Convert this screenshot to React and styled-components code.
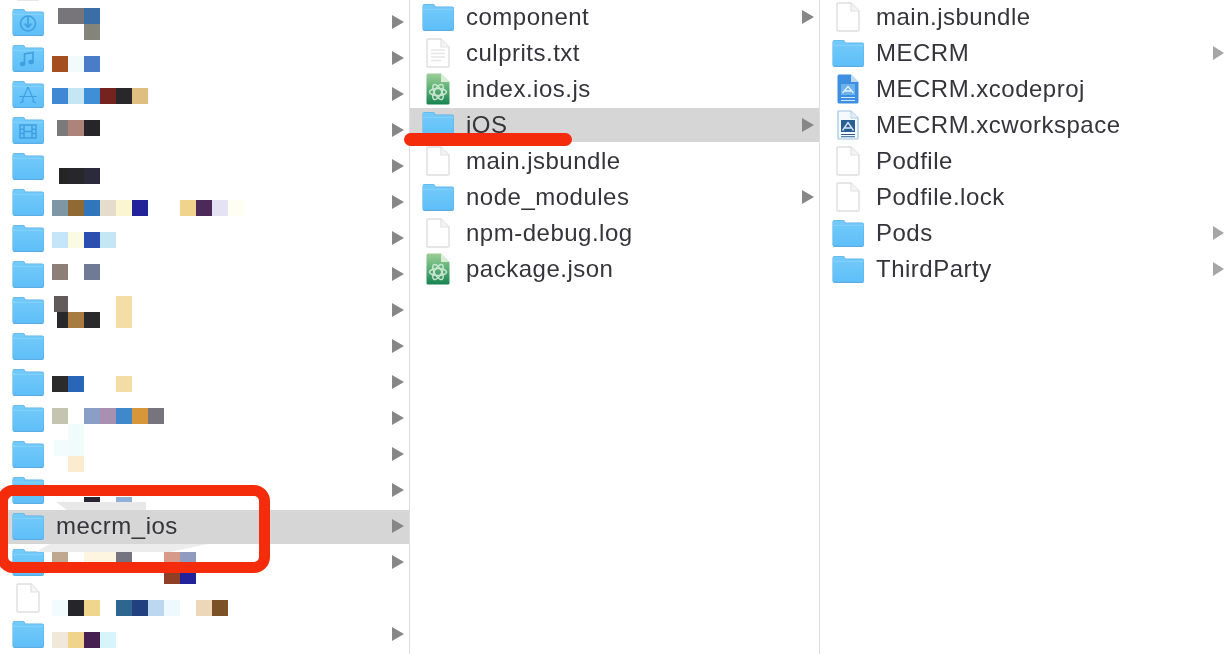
import React from 'react'
import styled, { createGlobalStyle } from 'styled-components'

const GlobalStyle = createGlobalStyle`
  html, body {
    margin: 0;
    padding: 0;
    background: #fff;
    overflow: hidden;
  }
`

const Finder = styled.div`
  position: relative;
  display: flex;
  width: 1226px;
  height: 654px;
  overflow: hidden;
  background: #fff;
  filter: blur(0.55px);
  font-family: 'Liberation Sans', Arial, sans-serif;
`

const Column = styled.div`
  flex: 0 0 410px;
  box-sizing: border-box;
  height: 690px;
  margin-top: ${(props) => props.$offset}px;
  border-right: 1px solid #dedede;
`

const Row = styled.div`
  display: flex;
  align-items: center;
  gap: 12px;
  height: 36px;
  box-sizing: border-box;
  padding: 0 5px 0 12px;
  background: ${(props) =>
    props.$band === undefined
      ? 'transparent'
      : `linear-gradient(transparent ${props.$band}px, #d6d6d6 ${props.$band}px, #d6d6d6 ${props.$band + 34}px, transparent ${props.$band + 34}px)`};
`

const IconSlot = styled.div`
  flex: 0 0 32px;
  height: 32px;
  display: flex;
  align-items: center;
  justify-content: center;
`

const Name = styled.span`
  flex: 1;
  font-size: 24px;
  letter-spacing: 0.5px;
  color: #34343a;
  white-space: nowrap;
`

const Arrow = styled.i`
  width: 0;
  height: 0;
  border-left: ${(props) => (props.$pale ? '11px solid #a6a6a6' : '12px solid #878787')};
  border-top: 7px solid transparent;
  border-bottom: 7px solid transparent;
`

const Mosaic = styled.div`
  position: absolute;
  left: 52px;
  top: 8px;
  display: grid;
  grid-template-columns: repeat(12, 16px);
  grid-auto-rows: 16px;
`

const Tile = styled.div`
  grid-row: ${(props) => props.$row + 1};
  grid-column: ${(props) => props.$col + 1};
  background: ${(props) => props.$color};
  margin-left: ${(props) => props.$inset || 0}px;
  margin-top: ${(props) => props.$drop || 0}px;
`

const SmearTop = styled.div`
  position: absolute;
  left: 56px;
  top: 502px;
  width: 90px;
  height: 8px;
  background: #e8e8e8;
  clip-path: polygon(0 0, 100% 0, 100% 100%, 12% 100%);
`

const SmearBottom = styled.div`
  position: absolute;
  left: 36px;
  top: 544px;
  width: 172px;
  height: 8px;
  background: #ececec;
  clip-path: polygon(8% 0, 100% 0, 78% 100%, 0 100%);
`

const RedBox = styled.div`
  position: absolute;
  left: -3px;
  top: 485px;
  width: 273px;
  height: 88px;
  box-sizing: border-box;
  border: 11px solid #f52c0c;
  border-radius: 16px;
`

const RedLine = styled.div`
  position: absolute;
  left: 404px;
  top: 133px;
  width: 168px;
  height: 13px;
  border-radius: 7px;
  background: #f52c0c;
`

const FolderIcon = ({ glyph }) => (
  <svg width="32" height="28" viewBox="0 0 32 28">
    <defs>
      <linearGradient id="folderFill" x1="0" y1="0" x2="0" y2="1">
        <stop offset="0" stopColor="#74cbfa" />
        <stop offset="1" stopColor="#5fbff8" />
      </linearGradient>
    </defs>
    <path d="M0.5 3 Q0.5 1 2.5 1 H11 Q12.6 1 13.4 3.4 H30 Q32 3.4 32 5.4 V26 Q32 28 30 28 H2.5 Q0.5 28 0.5 26 Z" fill="#5aaee4" />
    <path d="M0.8 3.4 Q0.8 1.6 2.6 1.6 H11 Q12.2 1.6 13 4.2 H30 Q31.6 4.2 31.6 5.6 V25.6 Q31.6 26.8 30 26.8 H2.4 Q0.8 26.8 0.8 25.6 Z" fill="url(#folderFill)" />
    <path d="M1 6.4 H31.4" stroke="#86d3fb" strokeWidth="1" />
    {glyph === 'download' && (
      <g fill="none" stroke="#3f9fe2" strokeWidth="1.6">
        <circle cx="16" cy="15.5" r="7.5" />
        <path d="M16 9 V19 M12.6 15.6 L16 19.4 L19.4 15.6" />
      </g>
    )}
    {glyph === 'music' && (
      <g fill="#3f9fe2" stroke="#3f9fe2">
        <path d="M12.5 20 V10 L21 8.5 V18" fill="none" strokeWidth="1.6" />
        <ellipse cx="10.6" cy="20" rx="2.4" ry="1.9" />
        <ellipse cx="19.1" cy="18" rx="2.4" ry="1.9" />
      </g>
    )}
    {glyph === 'apps' && (
      <g fill="none" stroke="#3f9fe2" strokeWidth="1.2">
        <path d="M16 7 L10 21 M16 7 L22 21 M7 16.5 H25 M12 21 L8 23 M20 21 L24 23" />
      </g>
    )}
    {glyph === 'movies' && (
      <g fill="none" stroke="#3f9fe2" strokeWidth="1.5">
        <rect x="8" y="9" width="16" height="13" />
        <path d="M12 9 V22 M20 9 V22 M8 13.3 H12 M8 17.6 H12 M20 13.3 H24 M20 17.6 H24 M12 15.5 H20" />
      </g>
    )}
  </svg>
)

const DocIcon = ({ lines }) => (
  <svg width="24" height="30" viewBox="0 0 24 30">
    <path d="M1 2 Q1 1 2 1 H15 L23 9 V28 Q23 29 22 29 H2 Q1 29 1 28 Z" fill="#fff" stroke="#dedede" strokeWidth="1.4" />
    <path d="M15 1 V9 H23" fill="#f4f4f4" stroke="#e2e2e2" strokeWidth="1.2" />
    {lines && <path d="M5 12 H19 M5 15.5 H19 M5 19 H19 M5 22.5 H15" stroke="#e6e6e6" strokeWidth="1.6" />}
  </svg>
)

const ScriptIcon = () => (
  <svg width="24" height="32" viewBox="0 0 24 32">
    <defs>
      <linearGradient id="scriptFill" x1="0" y1="0" x2="0" y2="1">
        <stop offset="0" stopColor="#9ccf98" />
        <stop offset="0.55" stopColor="#55ab72" />
        <stop offset="1" stopColor="#17824f" />
      </linearGradient>
    </defs>
    <path d="M0.5 2 Q0.5 0.5 2 0.5 H15 L23.5 9 V30 Q23.5 31.5 22 31.5 H2 Q0.5 31.5 0.5 30 Z" fill="url(#scriptFill)" />
    <path d="M15 0.5 V9 H23.5 Z" fill="#d8ecd6" />
    <g fill="none" stroke="#c8e6cf" strokeWidth="1.5">
      <ellipse cx="12" cy="19" rx="8.5" ry="3.6" />
      <ellipse cx="12" cy="19" rx="8.5" ry="3.6" transform="rotate(60 12 19)" />
      <ellipse cx="12" cy="19" rx="8.5" ry="3.6" transform="rotate(120 12 19)" />
    </g>
  </svg>
)

const ProjectIcon = () => (
  <svg width="22" height="30" viewBox="0 0 22 30">
    <path d="M0.5 2 Q0.5 0.5 2 0.5 H14 L21.5 8 V28 Q21.5 29.5 20 29.5 H2 Q0.5 29.5 0.5 28 Z" fill="#3e8fdf" />
    <path d="M14 0.5 V8 H21.5 Z" fill="#bcdcf6" />
    <rect x="4" y="10" width="14" height="11" fill="#6cb2ee" />
    <path d="M5.5 19 L11 12.5 L16.5 19 M8 17 H14" fill="none" stroke="#e4f2fd" strokeWidth="1.3" />
    <path d="M4 23.5 H18 M4 26.5 H18" stroke="#cfe6fa" strokeWidth="1.2" />
  </svg>
)

const WorkspaceIcon = () => (
  <svg width="22" height="30" viewBox="0 0 22 30">
    <path d="M1 2 Q1 1 2 1 H14 L21 8 V28 Q21 29 20 29 H2 Q1 29 1 28 Z" fill="#f6fafd" stroke="#9cc4e4" strokeWidth="1.2" />
    <path d="M14 1 V8 H21" fill="#e6eff6" stroke="#b8d2e6" strokeWidth="1" />
    <rect x="4" y="10" width="14" height="12" fill="#2b5f94" />
    <path d="M5.5 20.5 L11 12.5 L16.5 20.5 M8 18 H14" fill="none" stroke="#cfe4f6" strokeWidth="1.4" />
    <path d="M4 24.5 H18 M4 26.8 H18" stroke="#2b5f94" strokeWidth="1.1" />
  </svg>
)

const icons = {
  folder: <FolderIcon />,
  download: <FolderIcon glyph="download" />,
  music: <FolderIcon glyph="music" />,
  apps: <FolderIcon glyph="apps" />,
  movies: <FolderIcon glyph="movies" />,
  doc: <DocIcon />,
  text: <DocIcon lines />,
  script: <ScriptIcon />,
  project: <ProjectIcon />,
  workspace: <WorkspaceIcon />,
}

const plainFolders = (count) => Array.from({ length: count }, () => ({ icon: 'folder', more: true }))

const hiddenRows = [
  { icon: 'doc' },
  { icon: 'download', more: true },
  { icon: 'music', more: true },
  { icon: 'apps', more: true },
  { icon: 'movies', more: true },
  ...plainFolders(10),
  { icon: 'folder', more: true, name: 'mecrm_ios', band: 2 },
  { icon: 'folder', more: true },
  { icon: 'doc' },
  { icon: 'folder', more: true },
]

const projectRows = [
  { icon: 'folder', name: 'component', more: true },
  { icon: 'text', name: 'culprits.txt' },
  { icon: 'script', name: 'index.ios.js' },
  { icon: 'folder', name: 'iOS', more: true, band: 1 },
  { icon: 'doc', name: 'main.jsbundle' },
  { icon: 'folder', name: 'node_modules', more: true },
  { icon: 'doc', name: 'npm-debug.log' },
  { icon: 'script', name: 'package.json' },
]

const iosRows = [
  { icon: 'doc', name: 'main.jsbundle' },
  { icon: 'folder', name: 'MECRM', more: true, pale: true },
  { icon: 'project', name: 'MECRM.xcodeproj' },
  { icon: 'workspace', name: 'MECRM.xcworkspace' },
  { icon: 'doc', name: 'Podfile' },
  { icon: 'doc', name: 'Podfile.lock' },
  { icon: 'folder', name: 'Pods', more: true, pale: true },
  { icon: 'folder', name: 'ThirdParty', more: true, pale: true },
]

// the scribbled out names in the first column, [grid row, grid column, colour, inset, drop]
const tiles = [
  [0, 0, '#77757a', 6], [0, 1, '#77757a'], [0, 2, '#3a6ea5'], [1, 2, '#85847a'],
  [3, 0, '#a34f1f'], [3, 1, '#f2fbfb'], [3, 2, '#4a7cc8'],
  [5, 0, '#3f88d4'], [5, 1, '#c5e6f5'], [5, 2, '#3f8fd8'], [5, 3, '#74231f'], [5, 4, '#28282b'], [5, 5, '#e0bd80'],
  [7, 0, '#7a7a7a', 5], [7, 1, '#ad837a'], [7, 2, '#26262a'],
  [10, 0, '#252528', 7], [10, 1, '#27272b'], [10, 2, '#2b2a3c'],
  [12, 0, '#7f97a5'], [12, 1, '#8f6a35'], [12, 2, '#2f76bd'], [12, 3, '#e6dccb'], [12, 4, '#fbf6cf'], [12, 5, '#22229b'],
  [12, 8, '#f0d48c'], [12, 9, '#4b2a5a'], [12, 10, '#e3e3f3'], [12, 11, '#fffef2'],
  [14, 0, '#c5e6f8'], [14, 1, '#fbfbe3'], [14, 2, '#2a4fb0'], [14, 3, '#c5e6f5'],
  [16, 0, '#8b7f78'], [16, 2, '#6f7a95'],
  [18, 0, '#635a5c', 2], [18, 4, '#f5dda8'],
  [19, 0, '#28282a', 5], [19, 1, '#a87c40'], [19, 2, '#2a2a2c'], [19, 4, '#f5dda8'],
  [23, 0, '#2b2b2b'], [23, 1, '#2a66b8'], [23, 4, '#f3dca5'],
  [25, 0, '#c5c4b0'], [25, 2, '#8a9fc5'], [25, 3, '#a890b0'], [25, 4, '#3f88cc'], [25, 5, '#d8963a'], [25, 6, '#76747c'],
  [26, 1, '#f0fcfc'], [27, 0, '#f2fcfd', 2], [27, 1, '#f0fcfc'], [28, 1, '#fbecd0'],
  [30, 2, '#2a2430', 0, 9], [30, 4, '#8fb0d8', 0, 9],
  [34, 0, '#c0a890'], [34, 2, '#fdf5e0'], [34, 3, '#fdf5e0'], [34, 4, '#747480'], [34, 7, '#d89a88'], [34, 8, '#8f9cc0'],
  [35, 7, '#8f3f25'], [35, 8, '#22229b'],
  [37, 0, '#f2fbfd'], [37, 1, '#26262a'], [37, 2, '#f0d68c'], [37, 4, '#2f6690'], [37, 5, '#22407f'], [37, 6, '#bcd8f0'], [37, 7, '#eef9fd'],
  [37, 9, '#ecd8b8'], [37, 10, '#7a5226'],
  [39, 0, '#f0e8d8'], [39, 1, '#f0d48c'], [39, 2, '#452050'], [39, 3, '#d8f4fb'],
]

const Listing = ({ rows, offset }) => (
  <Column $offset={offset}>
    {rows.map((row, i) => (
      <Row key={i} $band={row.band}>
        <IconSlot>{icons[row.icon]}</IconSlot>
        <Name>{row.name}</Name>
        {row.more && <Arrow $pale={row.pale} />}
      </Row>
    ))}
  </Column>
)

const App = () => (
  <Finder>
    <GlobalStyle />
    <Listing rows={hiddenRows} offset={-32} />
    <Listing rows={projectRows} offset={-1} />
    <Listing rows={iosRows} offset={-1} />
    <Mosaic>
      {tiles.map(([row, col, color, inset, drop], i) => (
        <Tile key={i} $row={row} $col={col} $color={color} $inset={inset} $drop={drop} />
      ))}
    </Mosaic>
    <SmearTop />
    <SmearBottom />
    <RedBox />
    <RedLine />
  </Finder>
)

export default App
